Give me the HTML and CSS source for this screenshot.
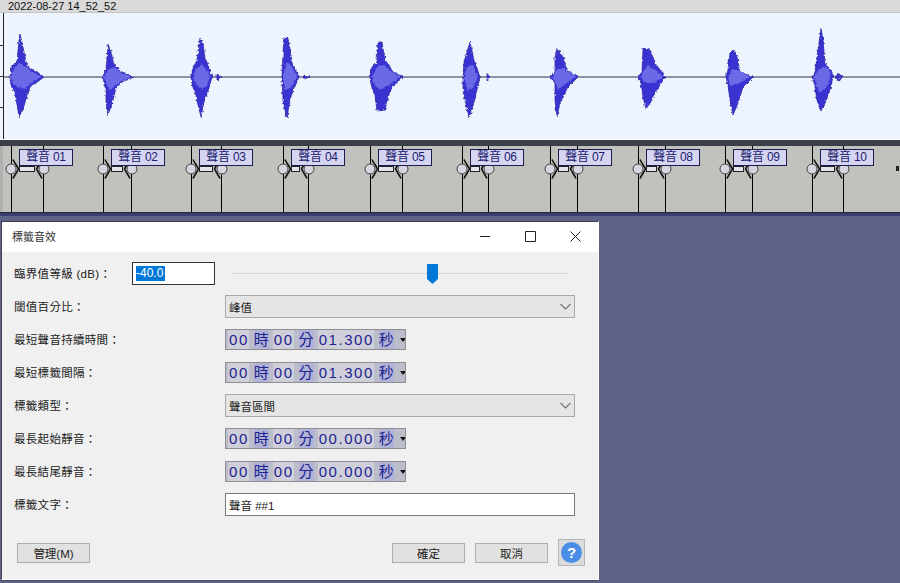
FILE: index.html
```html
<!DOCTYPE html>
<html lang="zh-Hant">
<head>
  <meta charset="UTF-8" />
  <title>標籤音效</title>
  <link rel="stylesheet" href="styles.css">
</head>
<body>
  <!-- symbols shared by the markers -->
  <svg class="defs" aria-hidden="true">
    <symbol id="handle" viewBox="0 0 20 22">
      <circle cx="8" cy="11" r="5" fill="#d6d6e0" stroke="#444" stroke-width="1"/>
      <path d="M10 1.5C11 4 14 8 15.5 11C14 14 11 18 10 20.5" fill="none" stroke="#111" stroke-width="1.6"/>
    </symbol>
    <filter id="rough" x="-20%" y="-20%" width="140%" height="140%">
      <feTurbulence type="fractalNoise" baseFrequency="0.4" numOctaves="1" seed="4" result="noise"/>
      <feDisplacementMap in="SourceGraphic" in2="noise" scale="4" xChannelSelector="R" yChannelSelector="G"/>
    </filter>
  </svg>

  <div class="track-title"><span>2022-08-27 14_52_52</span></div>

  <!-- Waveform -->
  <div class="wave-panel">
    <div class="ruler"><i></i><i></i><i></i></div>
    <svg class="wave" viewBox="4 13 896 126">
      <line class="axis" x1="4" y1="77" x2="900" y2="77"/>
      <g class="outer">
        <polygon points="10,77 12,66 17,62 19,40 20,34 22,42 26,62 29,68 36,71 44,77 36,83 30,87 27,95 24,106 19,117 17,105 15,92 11,86"/>
        <polygon points="103,76 106,68 107,60 108,44 111,52 114,64 120,71 133,77 122,82 116,88 113,100 108,115 106,102 106,90 104,84"/>
        <polygon points="191,77 193,68 197,60 200,38 203,44 205,58 210,70 212,77 209,88 204,102 201,117 198,105 195,92 192,85"/>
        <polygon points="282,77 283,53 284,38 288,38 290,50 292,63 298,73 299,77 293,90 290,100 287,118 285,110 283,100"/>
        <polygon points="370,77 372,67 377,62 378,42 382,42 385,60 393,72 403,77 392,87 387,100 385,110 377,111 375,95 371,85"/>
        <polygon points="463,77 464,62 470,42 474,60 480,77 477,90 472,110 469,117 465,100 463,87"/>
        <polygon points="550,77 555,72 555,57 557,49 563,57 567,70 578,77 568,87 560,103 557,117 555,100 555,83"/>
        <polygon points="638,77 642,72 643,48 650,50 655,63 665,77 657,90 650,103 646,109 643,97 641,82"/>
        <polygon points="726,77 728,70 730,53 733,50 737,57 740,72 753,77 743,87 738,103 733,115 730,100 728,85"/>
        <polygon points="812,77 815,72 818,50 821,28 823,40 825,63 832,72 833,77 830,90 825,103 821,111 817,100 815,87"/>
        <polygon points="217,74 222,77 217,80"/>
        <polygon points="304,75 310,77 304,79"/>
        <polygon points="487,74 491,77 487,80"/>
        <polygon points="838,73 843,77 838,81 836,77"/>
      </g>
      <g class="inner">
        <polygon points="11,77 14,68 20,63 26,67 32,72 42,77 32,82 24,89 15,86 12,83"/>
        <polygon points="104,77 108,70 114,67 122,73 131,77 120,82 110,90 107,85"/>
        <polygon points="193,77 196,69 202,64 208,72 210,77 207,85 202,90 196,84"/>
        <polygon points="283,77 286,64 290,64 296,74 297,78 290,88 285,90"/>
        <polygon points="372,77 377,67 383,65 392,72 401,77 390,84 380,90 375,85"/>
        <polygon points="464,77 467,67 473,65 478,77 473,88 467,90"/>
        <polygon points="552,77 557,69 565,69 576,77 565,84 558,90 556,83"/>
        <polygon points="641,77 644,71 648,65 657,71 663,77 652,84 644,82"/>
        <polygon points="728,77 732,69 740,71 750,77 738,84 730,85"/>
        <polygon points="814,77 819,69 827,67 831,74 828,85 820,93 816,85"/>
      </g>
    </svg>
  </div>

  <!-- Markers -->
  <div class="marker-strip">
    <div class="marker" style="left:11px;width:33px"><span class="marker-label">聲音 01</span><span class="marker-link"></span><svg class="handle handle-in"><use href="#handle"/></svg><svg class="handle handle-out"><use href="#handle"/></svg></div>
    <div class="marker" style="left:103px;width:29px"><span class="marker-label">聲音 02</span><span class="marker-link"></span><svg class="handle handle-in"><use href="#handle"/></svg><svg class="handle handle-out"><use href="#handle"/></svg></div>
    <div class="marker" style="left:191px;width:31px"><span class="marker-label">聲音 03</span><span class="marker-link"></span><svg class="handle handle-in"><use href="#handle"/></svg><svg class="handle handle-out"><use href="#handle"/></svg></div>
    <div class="marker" style="left:283px;width:26px"><span class="marker-label">聲音 04</span><span class="marker-link"></span><svg class="handle handle-in"><use href="#handle"/></svg><svg class="handle handle-out"><use href="#handle"/></svg></div>
    <div class="marker" style="left:370px;width:33px"><span class="marker-label">聲音 05</span><span class="marker-link"></span><svg class="handle handle-in"><use href="#handle"/></svg><svg class="handle handle-out"><use href="#handle"/></svg></div>
    <div class="marker" style="left:462px;width:27px"><span class="marker-label">聲音 06</span><span class="marker-link"></span><svg class="handle handle-in"><use href="#handle"/></svg><svg class="handle handle-out"><use href="#handle"/></svg></div>
    <div class="marker" style="left:550px;width:28px"><span class="marker-label">聲音 07</span><span class="marker-link"></span><svg class="handle handle-in"><use href="#handle"/></svg><svg class="handle handle-out"><use href="#handle"/></svg></div>
    <div class="marker" style="left:638px;width:28px"><span class="marker-label">聲音 08</span><span class="marker-link"></span><svg class="handle handle-in"><use href="#handle"/></svg><svg class="handle handle-out"><use href="#handle"/></svg></div>
    <div class="marker" style="left:725px;width:28px"><span class="marker-label">聲音 09</span><span class="marker-link"></span><svg class="handle handle-in"><use href="#handle"/></svg><svg class="handle handle-out"><use href="#handle"/></svg></div>
    <div class="marker" style="left:812px;width:32px"><span class="marker-label">聲音 10</span><span class="marker-link"></span><svg class="handle handle-in"><use href="#handle"/></svg><svg class="handle handle-out"><use href="#handle"/></svg></div>
    <span class="strip-end"></span>
  </div>

  <!-- Dialog -->
  <section class="dialog">
    <header class="titlebar">
      <span class="title">標籤音效</span>
      <div class="win-buttons">
        <svg width="11" height="11" viewBox="0 0 11 11"><path d="M0 5.5H10" stroke="#222" fill="none"/></svg>
        <svg width="11" height="11" viewBox="0 0 11 11"><path d="M.5 .5H10.5V10.5H.5Z" stroke="#222" fill="none"/></svg>
        <svg width="11" height="11" viewBox="0 0 11 11"><path d="M.5 .5L10.5 10.5M10.5 .5L.5 10.5" stroke="#222" fill="none"/></svg>
      </div>
    </header>

    <div class="form">
      <label>臨界值等級 (dB)：</label>
      <div class="level">
        <div class="level-input"><span class="selected">-40.0</span></div>
        <div class="slider">
          <svg class="thumb" width="11" height="20" viewBox="0 0 11 20"><path d="M0 0H11V15L5.5 20L0 15Z"/></svg>
        </div>
      </div>

      <label>閾值百分比：</label>
      <div class="combo">峰值<svg width="11" height="7" viewBox="0 0 11 7"><path d="M.5 1L5.5 6L10.5 1" fill="none" stroke="#777" stroke-width="1.2"/></svg></div>

      <label>最短聲音持續時間：</label>
      <div class="time"><b>00</b><em>時</em><b>00</b><em>分</em><b>01.300</b><em>秒</em><i></i></div>

      <label>最短標籤間隔：</label>
      <div class="time"><b>00</b><em>時</em><b>00</b><em>分</em><b>01.300</b><em>秒</em><i></i></div>

      <label>標籤類型：</label>
      <div class="combo">聲音區間<svg width="11" height="7" viewBox="0 0 11 7"><path d="M.5 1L5.5 6L10.5 1" fill="none" stroke="#777" stroke-width="1.2"/></svg></div>

      <label>最長起始靜音：</label>
      <div class="time"><b>00</b><em>時</em><b>00</b><em>分</em><b>00.000</b><em>秒</em><i></i></div>

      <label>最長結尾靜音：</label>
      <div class="time"><b>00</b><em>時</em><b>00</b><em>分</em><b>00.000</b><em>秒</em><i></i></div>

      <label>標籤文字：</label>
      <div class="text-input">聲音 ##1</div>
    </div>

    <footer class="actions">
      <button class="btn">管理(M)</button>
      <button class="btn btn-ok">確定</button>
      <button class="btn">取消</button>
      <button class="help"><span>?</span></button>
    </footer>
  </section>
</body>
</html>
```

FILE: styles.css
```css
*, *::before, *::after {
  box-sizing: border-box;
}
html, body {
  height: 100%;
}
body {
  margin: 0;
  overflow: hidden;
  background: #5f6388;
  color: #222;
  font-family: "Liberation Sans", "Noto Sans CJK TC", sans-serif;
  font-size: 12px;
}
.defs {
  position: absolute;
  width: 0;
  height: 0;
}

.track-title {
  height: 13px;
  padding-left: 8px;
  background: #d9d9d9;
  border-bottom: 1px solid #c6c6c6;
  font-size: 11px;
  line-height: 12px;
  color: #111;
}

/* waveform */
.wave-panel {
  display: flex;
  height: 127px;
  background: #eef4fd;
  border-bottom: 1px solid #fff;
}
.ruler {
  flex: none;
  width: 4px;
  display: flex;
  flex-direction: column;
  justify-content: center;
  gap: 30px;
  border-right: 1px solid #222;
}
.ruler i {
  display: block;
  height: 1px;
  background: #333;
}
.wave {
  flex: none;
  width: 896px;
  height: 126px;
}
.axis {
  stroke: #2c3050;
  stroke-width: 1;
}
.outer {
  filter: url(#rough);
}
.outer polygon {
  fill: #3a33d2;
  stroke: #25209c;
  stroke-width: .7;
}
.inner {
  filter: url(#rough);
}
.inner polygon {
  fill: #6a6ae6;
}

/* markers */
.marker-strip {
  position: relative;
  height: 76px;
  background: #c1c1bd;
  border-top: 6px solid #3b3f4a;
  border-bottom: 3px solid #3e3d72;
  box-shadow: inset 3px 0 0 #b0b0b0;
}
.marker-strip::after {
  content: "";
  position: absolute;
  left: 0;
  right: 0;
  bottom: 0;
  height: 1px;
  background: #23233a;
}
.marker {
  position: absolute;
  top: 0;
  bottom: 0;
  border-left: 1px solid #000;
  border-right: 1px solid #000;
}
.marker-label {
  position: absolute;
  left: 7px;
  top: 3px;
  z-index: 2;
  width: 54px;
  height: 17px;
  border: 1px solid #1c1c50;
  background: #d5d5f2;
  color: #1c1c6e;
  font-size: 12px;
  letter-spacing: -.2px;
  line-height: 15px;
  text-align: center;
  white-space: nowrap;
}
.marker-link {
  position: absolute;
  left: 7px;
  right: 8px;
  top: 20px;
  height: 6px;
  background: #e4e4ee;
  border: 1px solid #222;
}
.handle {
  position: absolute;
  top: 12px;
  width: 20px;
  height: 22px;
}
.handle-in {
  left: -9px;
}
.handle-out {
  right: -9px;
  transform: scaleX(-1);
}
.strip-end {
  position: absolute;
  left: 896px;
  top: 20px;
  width: 3px;
  height: 5px;
  background: #222;
}

/* dialog */
.dialog {
  position: absolute;
  left: 1px;
  top: 221px;
  width: 598px;
  height: 359px;
  background: #f0f0f0;
  border: 1px solid #3f4150;
  border-right-color: #fff;
  border-bottom-color: #fff;
  box-shadow: 0 1px 0 #4a4c60;
}
.titlebar {
  display: flex;
  align-items: center;
  justify-content: space-between;
  height: 30px;
  padding: 0 17px 2px 10px;
  background: #fff;
}
.title {
  font-size: 11px;
  color: #333;
}
.win-buttons {
  display: flex;
  gap: 34px;
}

.form {
  display: grid;
  grid-template-columns: 211px 350px;
  grid-auto-rows: 33px;
  align-items: center;
  padding: 5px 0 0 12px;
  font-size: 11.5px;
}
.form label {
  padding-bottom: 2px;
  color: #222;
  letter-spacing: .3px;
}
.level {
  display: flex;
  align-items: center;
  margin-left: -93px;
}
.level-input {
  flex: none;
  width: 83px;
  height: 23px;
  padding: 3px;
  background: #fff;
  border: 1px solid #333;
}
.selected {
  display: inline-block;
  width: 29px;
  height: 15px;
  background: #0078d7;
  color: #fff;
  font-size: 12px;
  line-height: 15px;
}
.slider {
  position: relative;
  width: 336px;
  height: 1px;
  margin-left: 17px;
  background: #d4d4d4;
}
.thumb {
  position: absolute;
  left: 195px;
  top: -9px;
  fill: #0078d7;
}

.combo {
  display: flex;
  align-items: center;
  justify-content: space-between;
  height: 23px;
  padding: 0 3px;
  background: #e5e5e5;
  border: 1px solid #a8a8a8;
  color: #222;
}
.time {
  display: flex;
  align-items: center;
  width: 181px;
  height: 21px;
  padding-left: 2px;
  background: #bcbdcb;
  border: 1px solid #8d8d92;
  color: #1e2390;
  overflow: hidden;
}
.time b {
  padding-left: 1px;
  background: #cfcfda;
  font-weight: 400;
  font-size: 15px;
  letter-spacing: 1.55px;
  line-height: 19px;
}
.time em {
  width: 16px;
  margin: 0 4px 0 5px;
  font-style: normal;
  font-size: 15px;
  line-height: 19px;
  text-align: center;
  background: #b0b2d6;
}
.time i {
  margin-left: 2px;
  border-left: 3px solid transparent;
  border-right: 3px solid transparent;
  border-top: 4px solid #111;
}
.text-input {
  display: flex;
  align-items: center;
  height: 23px;
  padding: 0 3px;
  background: #fff;
  border: 1px solid #777;
  color: #222;
}

.actions {
  display: flex;
  align-items: center;
  margin-top: 18px;
  padding: 0 13px 0 15px;
}
.btn {
  width: 73px;
  height: 20px;
  padding: 0;
  background: #e1e1e1;
  border: 1px solid #adadad;
  color: #222;
  font-family: inherit;
  font-size: 11.5px;
}
.btn-ok {
  margin-left: auto;
  margin-right: 10px;
}
.help {
  width: 27px;
  height: 27px;
  margin-left: 10px;
  padding: 0;
  display: flex;
  align-items: center;
  justify-content: center;
  background: #dcdcdc;
  border: 1px solid #b6b6b6;
}
.help span {
  width: 21px;
  height: 21px;
  border-radius: 50%;
  background: #4a8ee8;
  color: #fff;
  font: bold 15px/21px "Liberation Sans", sans-serif;
  text-align: center;
}
```
